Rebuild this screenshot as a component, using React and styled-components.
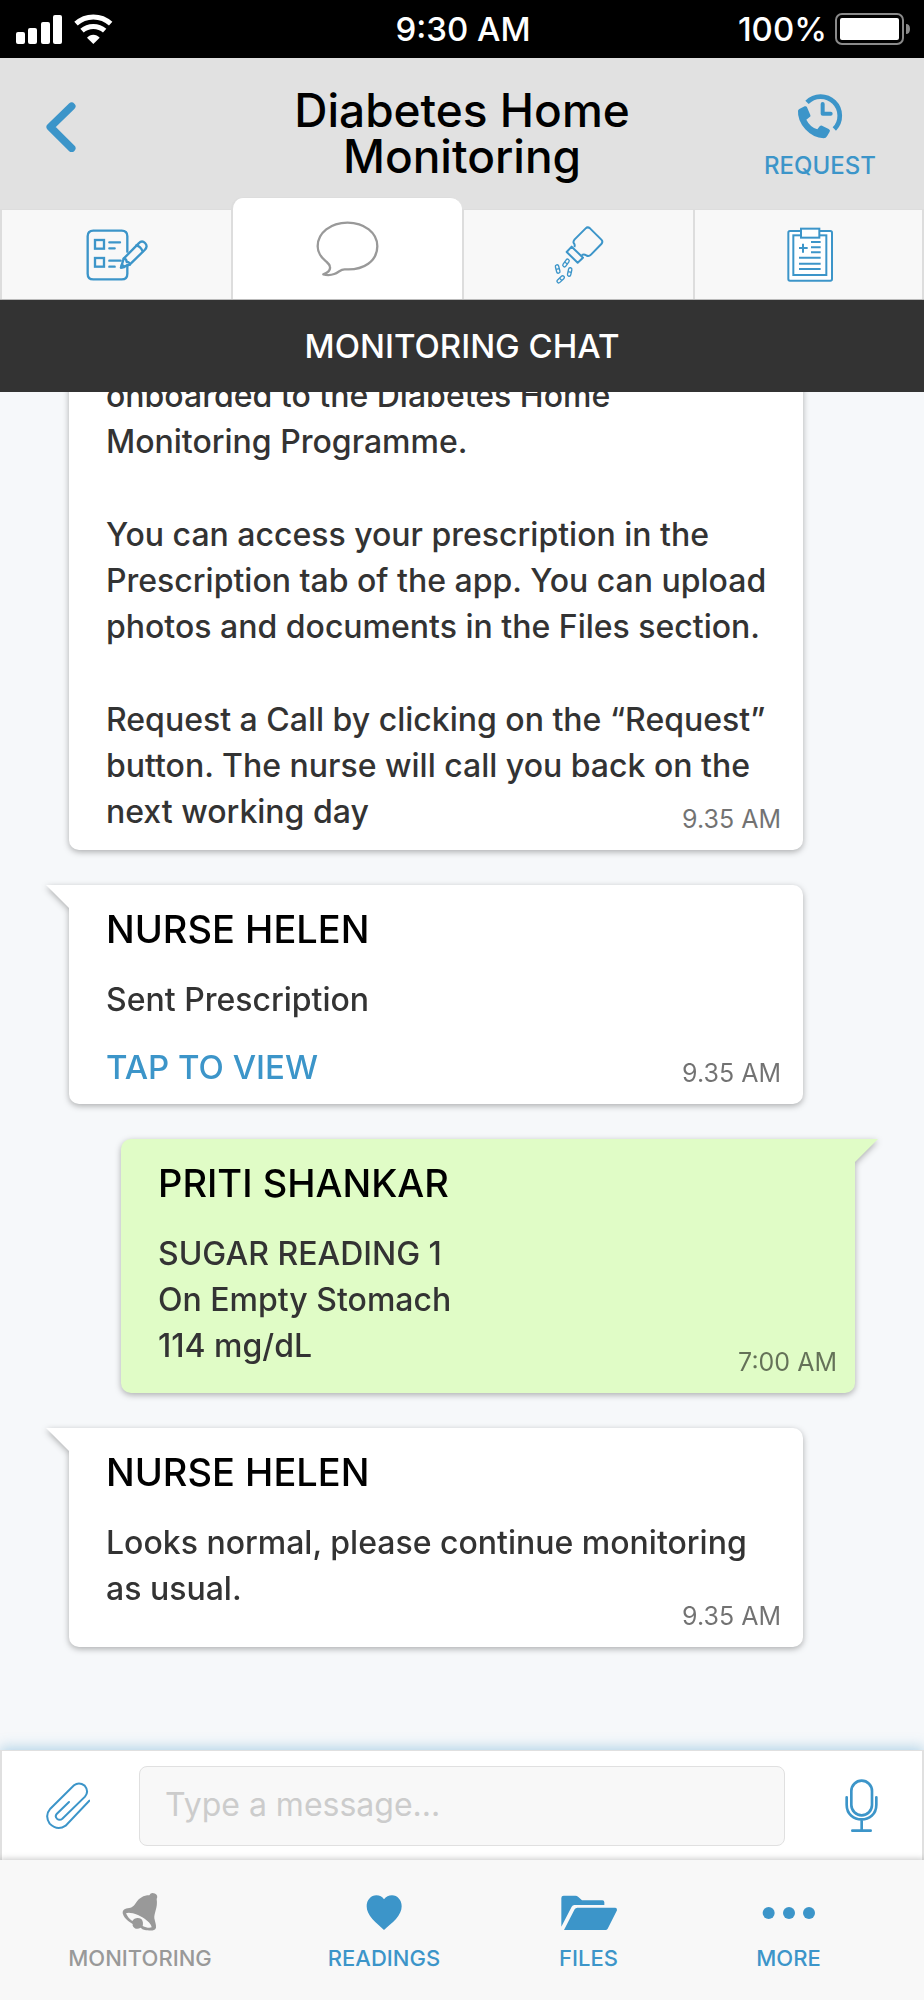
import React, { useState } from 'react';
import styled, { createGlobalStyle } from 'styled-components';

const blue = '#3c95c9';
const grey = '#999999';

const GlobalStyle = createGlobalStyle`
  * {
    box-sizing: border-box;
  }
  body {
    margin: 0;
    font-family: Inter, "Liberation Sans", sans-serif;
    font-weight: 500;
    color: #333333;
  }
  button, input {
    font: inherit;
  }
  h1, h2, h3, p {
    margin: 0;
    font-weight: inherit;
  }
`;

const Screen = styled.div`
  display: flex;
  flex-direction: column;
  height: 100vh;
  background: #f6f8fa;
`;

const StatusBar = styled.div`
  display: grid;
  grid-template-columns: 1fr auto 1fr;
  align-items: center;
  flex: none;
  height: 58px;
  padding: 0 14px 0 16px;
  background: #000000;
  color: #ffffff;
  font-size: 33px;
`;

const StatusGroup = styled.div`
  display: flex;
  align-items: center;
  justify-content: ${props => props.$end ? 'flex-end' : 'flex-start'};
  gap: ${props => props.$end ? '8px' : '11px'};
`;

const Header = styled.header`
  display: grid;
  grid-template-columns: 208px 1fr 208px;
  align-items: center;
  flex: none;
  height: 151px;
  padding-bottom: 2px;
  background: #e1e1e1;
`;

const IconButton = styled.button`
  display: flex;
  padding: 0;
  border: none;
  background: none;
  cursor: pointer;
`;

const BackButton = styled(IconButton)`
  justify-self: start;
  padding: 0 20px 12px 46px;
`;

const Title = styled.h1`
  color: #000000;
  font-size: 46px;
  line-height: 46px;
  text-align: center;
`;

const RequestButton = styled(IconButton)`
  flex-direction: column;
  align-items: center;
  justify-self: center;
  gap: 12px;
  padding-top: 8px;
  color: ${blue};
  font-size: 24px;
  line-height: 30px;
`;

const Tabs = styled.nav`
  display: flex;
  flex: none;
  height: 91px;
  border-bottom: 1px solid #bbbbbb;
  background: #e1e1e1;
`;

const Tab = styled.button`
  display: flex;
  align-items: center;
  justify-content: center;
  flex: 1;
  padding: 0;
  margin-top: ${props => props.$active ? '-12px' : '0'};
  border: solid #dddddd;
  border-width: 1px 0 0 2px;
  border-radius: ${props => props.$active ? '12px 12px 0 0' : '0'};
  background: ${props => props.$active ? '#ffffff' : '#f8f8f8'};
  cursor: pointer;

  &:last-child {
    box-shadow: inset -2px 0 #dddddd;
  }
`;

const SectionTitle = styled.h2`
  flex: none;
  background: #333333;
  color: #ffffff;
  font-size: 33px;
  line-height: 92px;
  text-align: center;
`;

const Messages = styled.main`
  display: flex;
  flex-direction: column;
  justify-content: flex-end;
  flex: 1;
  gap: 35px;
  min-height: 0;
  padding: 0 69px 103px;
  overflow: hidden;
`;

const Bubble = styled.article`
  position: relative;
  display: grid;
  flex: none;
  min-height: 219px;
  margin: ${props => props.$mine ? '0 0 0 52px' : '0 52px 0 0'};
  border-radius: ${props => props.$mine ? '10px 0 10px 10px' : '0 10px 10px 10px'};
  background: ${props => props.$mine ? '#e0fcc6' : '#ffffff'};
  filter: drop-shadow(0 2px 3px rgba(0, 0, 0, 0.3));

  &::before {
    content: "";
    position: absolute;
    top: 0;
    ${props => props.$mine ? 'right' : 'left'}: -23px;
    width: 24px;
    height: 24px;
    background: inherit;
    clip-path: ${props => props.$mine ? 'polygon(0 0, 100% 0, 0 100%)' : 'polygon(0 0, 100% 0, 100% 100%)'};
  }
`;

const BubbleContent = styled.div`
  grid-area: 1 / 1;
  padding: 20px 8px ${props => props.$roomy ? '24px' : '15px'} 37px;
`;

const Sender = styled.h3`
  margin-bottom: 24px;
  color: #000000;
  font-size: 38px;
  line-height: 48px;
`;

const Text = styled.p`
  font-size: 32px;
  line-height: 46px;
  white-space: pre-line;

  & + & {
    margin-top: 47px;
  }
`;

const ViewLink = styled.a`
  display: inline-block;
  margin-top: 22px;
  color: ${blue};
  font-size: 33px;
  line-height: 44px;
  text-decoration: none;
`;

const Time = styled.time`
  grid-area: 1 / 1;
  align-self: end;
  justify-self: end;
  margin: 0 ${props => props.$mine ? '18px' : '22px'} 15px 0;
  color: #000000;
  font-size: 25px;
  font-weight: 400;
  line-height: 32px;
  opacity: 0.55;
`;

const Composer = styled.form`
  display: flex;
  align-items: center;
  flex: none;
  gap: 49px;
  height: 110px;
  padding: 0 44px;
  border: solid #e0e0e0;
  border-width: 1px 2px 0;
  background: #ffffff;
  box-shadow: 0 -3px 12px rgba(60, 149, 201, 0.35);
`;

const ComposerButton = styled(IconButton)`
  justify-content: ${props => props.$end ? 'flex-end' : 'flex-start'};
  width: 44px;
`;

const MessageInput = styled.input`
  flex: 1;
  min-width: 0;
  height: 80px;
  padding: 0 25px 2px;
  border: 1px solid #e0e0e0;
  border-radius: 8px;
  outline: none;
  background: #f8f8f8;
  color: #333333;
  font-size: 32px;
  font-weight: 400;

  &::placeholder {
    color: #cccccc;
    opacity: 1;
  }
`;

const BottomNav = styled.nav`
  display: grid;
  grid-template-columns: 280fr 208fr 201fr 199fr;
  flex: none;
  padding: 31px 36px 28px 0;
  background: #f8f8f8;
  box-shadow: 0 -1px 6px rgba(0, 0, 0, 0.22);
  z-index: 1;
`;

const NavItem = styled.a`
  display: flex;
  flex-direction: column;
  align-items: center;
  gap: 13px;
  color: ${props => props.$active ? grey : blue};
  font-size: 22px;
  line-height: 28px;
  text-decoration: none;
`;

const SignalIcon = () => (
  <svg width="47" height="29" viewBox="0 0 47 29" fill="#fff">
    <rect x="0" y="17" width="9" height="12" rx="2" />
    <rect x="12" y="13" width="9" height="16" rx="2" />
    <rect x="25" y="7" width="9" height="22" rx="2" />
    <rect x="37" y="0" width="9" height="29" rx="2" />
  </svg>
);

const WifiIcon = () => (
  <svg width="39" height="30" viewBox="221 43 117 90" fill="none" stroke="#fff" strokeWidth="15">
    <path d="M227 72C256 45 302 45 331 72" />
    <path d="M245 93C264 76 294 76 313 93" />
    <path d="M279 133L260 114C270 102 288 102 298 114Z" fill="#fff" stroke="none" />
  </svg>
);

const BatteryIcon = () => (
  <svg width="75" height="32" viewBox="0 0 75 32">
    <rect x="1" y="1" width="67" height="30" rx="6" fill="none" stroke="#8a8a8a" strokeWidth="2" />
    <rect x="5" y="5" width="59" height="22" rx="2" fill="#fff" />
    <path d="M71 11q4 0 4 5t-4 5z" fill="#8a8a8a" />
  </svg>
);

const BackIcon = () => (
  <svg width="30" height="50" viewBox="137 306 90 150" fill="none" stroke={blue} strokeWidth="23" strokeLinecap="round" strokeLinejoin="round">
    <path d="M214 319L150 381L214 445" />
  </svg>
);

const CallTimeIcon = () => (
  <svg width="50" height="47" viewBox="1000 277 150 141" fill="none" stroke={blue}>
    <path d="M1036 308A57 57 0 1 1 1118 388" strokeWidth="14" />
    <path d="M1083 313V342H1107" strokeWidth="12" strokeLinecap="round" strokeLinejoin="round" />
    <path
      d="M1013 328L1029 320Q1034 318 1036 323L1046 346Q1048 350 1044 352L1034 360Q1045 382 1067 389L1074 380Q1077 377 1081 378L1101 388Q1107 391 1104 396L1096 410Q1093 416 1086 416Q1055 415 1031 389Q1007 361 1009 333Q1010 330 1013 328Z"
      fill={blue}
      stroke="none"
    />
  </svg>
);

const FormIcon = () => (
  <svg width="62" height="52" viewBox="257 115 186 156" fill="none" stroke={blue} strokeWidth="7" strokeLinecap="round" strokeLinejoin="round">
    <path d="M381 183V137Q381 120 364 120H279Q262 120 262 137V249Q262 266 279 266H364Q381 266 381 249V223" />
    <rect x="284" y="148" width="27" height="26" strokeLinejoin="miter" />
    <rect x="284" y="202" width="27" height="26" strokeLinejoin="miter" />
    <path d="M327 155H359M327 173H343M327 210H361M327 228H343" />
    <path d="M362 231L370 204L415 158Q425 148 434 157Q444 167 433 178L388 222Z" />
    <path d="M370 204Q379 204 379 214Q388 213 388 222M408 164Q421 167 427 182" />
    <path d="M362 231L372 229L365 222Z" fill={blue} />
  </svg>
);

const ChatIcon = () => (
  <svg width="63" height="56" viewBox="946 91 190 169" fill="none" stroke={grey} strokeWidth="7" strokeLinejoin="round">
    <path d="M1041 96C1092 96 1131 127 1131 167C1131 212 1090 240 1035 237C1020 235 1016 246 1001 251Q985 257 968 252C984 246 990 238 988 229C987 221 983 219 976 213C960 200 951 185 951 167C951 127 990 96 1041 96Z" />
  </svg>
);

const Pill = ({ x, y, angle }) => (
  <g transform={`translate(${x} ${y}) rotate(${angle})`} strokeWidth="4">
    <rect x="-5" y="-13" width="10" height="26" rx="5" />
    <path d="M-5 0H5" />
  </g>
);

const PillsIcon = () => (
  <svg width="50" height="58" viewBox="275 103 150 174" fill="none" stroke={blue} strokeWidth="6" strokeLinejoin="round">
    <path d="M336 166Q339 159 334 154Q332 149 337 143L370 110Q376 104 383 110L417 144Q423 150 417 157L386 189Q379 196 372 191Q365 187 358 190" />
    <path d="M328 165L362 198L346 213L313 181Z" />
    <Pill x={311} y={214} angle={35} />
    <Pill x={286} y={232} angle={-14} />
    <Pill x={322} y={241} angle={12} />
    <Pill x={295} y={263} angle={46} />
  </svg>
);

const ClipboardIcon = () => (
  <svg width="46" height="55" viewBox="970 109 138 165" fill="none" stroke={blue} strokeWidth="6">
    <rect x="974" y="121" width="131" height="149" rx="5" fill="#fff" />
    <rect x="989" y="134" width="99" height="119" />
    <rect x="1012" y="114" width="55" height="27" fill="#fff" />
    <path d="M1042 154H1071M1042 170H1071M1042 185H1071M1006 201H1071M1006 219H1071M1006 235H1071M1006 172H1032M1018 159V186" />
  </svg>
);

const ClipIcon = () => (
  <svg width="44" height="48" viewBox="137 242 132 144" fill="none" stroke={blue} strokeWidth="6" strokeLinecap="round">
    <path d="M206 302L169 338Q163 345 170 352Q178 359 186 352L254 286Q267 270 253 253Q236 240 221 252L150 322Q132 343 148 367Q171 390 196 373L267 298" />
  </svg>
);

const MicIcon = () => (
  <svg width="33" height="54" viewBox="1150 238 99 162" fill="none" stroke={blue} strokeWidth="8" strokeLinecap="round">
    <rect x="1169" y="243" width="62" height="104" rx="31" />
    <path d="M1155 293V315C1155 374 1244 374 1244 315V293M1200 360V390M1172 393H1227" />
  </svg>
);

const BellIcon = () => (
  <svg width="40" height="40" viewBox="360 573 120 120" fill={grey}>
    <path
      fillRule="evenodd"
      d="M448 586A12 12 0 1 1 470 597C474 623 462 638 463 655C465 666 469 674 468 683C465 692 454 693 443 691C430 690 427 688 422 683C413 689 402 687 398 677V672C386 665 373 656 369 643C366 634 371 626 383 625C396 624 402 618 409 607C418 594 430 586 448 586ZM378 640C382 650 389 658 397 663C402 654 414 651 424 657C429 662 430 671 428 678C438 683 449 685 455 682C454 670 433 653 414 645C398 639 385 636 378 640Z"
    />
  </svg>
);

const HeartIcon = () => (
  <svg width="40" height="40" viewBox="1092 573 120 120" fill={blue}>
    <path d="M1152 690C1142 680 1128 670 1117 657C1106 644 1100 632 1100 619C1100 600 1113 586 1129 586C1139 586 1147 590 1152 598C1158 590 1166 586 1176 586C1192 586 1205 600 1205 619C1205 632 1199 644 1188 657C1177 670 1162 680 1152 690Z" />
  </svg>
);

const FolderIcon = () => (
  <svg width="58" height="40" viewBox="295 573 174 120" fill={blue}>
    <path d="M299 680V594Q299 587 306 587H341Q346 587 350 591L361 601H422Q428 601 428 607V615H338Q333 615 330 620Z" />
    <path d="M307 690L339 628Q342 623 347 623H461Q467 624 466 631L438 686Q436 690 431 690Z" />
  </svg>
);

const MoreIcon = () => (
  <svg width="54" height="40" viewBox="897 573 162 120" fill={blue}>
    <circle cx="917" cy="639" r="18" />
    <circle cx="978" cy="639" r="18" />
    <circle cx="1038" cy="639" r="18" />
  </svg>
);

const tabs = [
  { id: 'form', label: 'Readings form', Icon: FormIcon },
  { id: 'chat', label: 'Chat', Icon: ChatIcon },
  { id: 'prescription', label: 'Prescription', Icon: PillsIcon },
  { id: 'report', label: 'Report', Icon: ClipboardIcon },
];

const messages = [
  {
    paragraphs: [
      'onboarded to the Diabetes Home\nMonitoring Programme.',
      'You can access your prescription in the\nPrescription tab of the app. You can upload\nphotos and documents in the Files section.',
      'Request a Call by clicking on the “Request”\nbutton. The nurse will call you back on the\nnext working day',
    ],
    time: '9.35 AM',
  },
  { sender: 'NURSE HELEN', paragraphs: ['Sent Prescription'], link: 'TAP TO VIEW', time: '9.35 AM' },
  {
    sender: 'PRITI SHANKAR',
    paragraphs: ['SUGAR READING 1\nOn Empty Stomach\n114 mg/dL'],
    time: '7:00 AM',
    mine: true,
  },
  {
    sender: 'NURSE HELEN',
    paragraphs: ['Looks normal, please continue monitoring\nas usual.'],
    time: '9.35 AM',
  },
];

const navItems = [
  { label: 'MONITORING', Icon: BellIcon, active: true },
  { label: 'READINGS', Icon: HeartIcon },
  { label: 'FILES', Icon: FolderIcon },
  { label: 'MORE', Icon: MoreIcon },
];

function Message({ sender, paragraphs, link, time, mine }) {
  return (
    <Bubble $mine={mine}>
      <BubbleContent $roomy={mine}>
        {sender && <Sender>{sender}</Sender>}
        {paragraphs.map((text, index) => (
          <Text key={index}>{text}</Text>
        ))}
        {link && <ViewLink href="#prescription">{link}</ViewLink>}
      </BubbleContent>
      <Time $mine={mine}>{time}</Time>
    </Bubble>
  );
}

export default function App() {
  const [tab, setTab] = useState('chat');
  const [draft, setDraft] = useState('');

  return (
    <>
      <GlobalStyle />
      <Screen>
        <StatusBar>
          <StatusGroup>
            <SignalIcon />
            <WifiIcon />
          </StatusGroup>
          <span>9:30 AM</span>
          <StatusGroup $end>
            <span>100%</span>
            <BatteryIcon />
          </StatusGroup>
        </StatusBar>

        <Header>
          <BackButton type="button" aria-label="Back"><BackIcon /></BackButton>
          <Title>Diabetes Home Monitoring</Title>
          <RequestButton type="button">
            <CallTimeIcon />
            REQUEST
          </RequestButton>
        </Header>

        <Tabs>
          {tabs.map(({ id, label, Icon }) => (
            <Tab key={id} type="button" aria-label={label} $active={id === tab} onClick={() => setTab(id)}>
              <Icon />
            </Tab>
          ))}
        </Tabs>
        <SectionTitle>MONITORING CHAT</SectionTitle>

        <Messages>
          {messages.map((message, index) => (
            <Message key={index} {...message} />
          ))}
        </Messages>

        <Composer onSubmit={e => e.preventDefault()}>
          <ComposerButton type="button" aria-label="Attach a file"><ClipIcon /></ComposerButton>
          <MessageInput
            type="text"
            aria-label="Message"
            placeholder="Type a message..."
            value={draft}
            onChange={e => setDraft(e.target.value)}
          />
          <ComposerButton type="button" aria-label="Record a message" $end><MicIcon /></ComposerButton>
        </Composer>

        <BottomNav>
          {navItems.map(({ label, Icon, active }) => (
            <NavItem key={label} href="#" $active={active}>
              <Icon />
              {label}
            </NavItem>
          ))}
        </BottomNav>
      </Screen>
    </>
  );
}
